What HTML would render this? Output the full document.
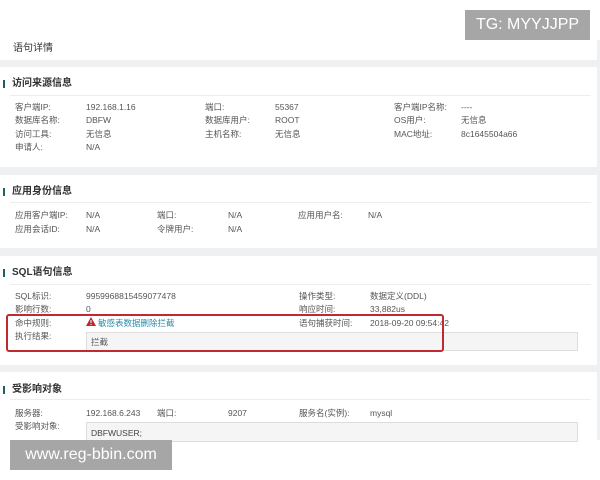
<!DOCTYPE html>
<html><head><meta charset="utf-8"><style>
*{margin:0;padding:0;box-sizing:border-box}
body{width:600px;height:480px;background:#fff;position:relative;overflow:hidden;font-family:"Liberation Sans","Noto Sans CJK SC",sans-serif;color:#555;font-size:8.5px}
.bg{position:absolute;left:0;top:40px;width:600px;height:400px;background:#eef0f1}
.p{position:absolute;left:0;width:597px;background:#fff}
.t{position:absolute;white-space:nowrap;line-height:10px}
.h{position:absolute;left:12px;font-size:10px;font-weight:bold;color:#333;line-height:12px}
.bar{position:absolute;left:3px;width:2px;height:8px;background:#1f5f63}
.dv{position:absolute;left:10px;right:6px;height:1px;background:#eceeee}
.box{position:absolute;left:86px;width:492px;background:#f5f5f5;border:1px solid #ddd}
</style></head><body>
<div class="bg"></div>
<div class="p" style="top:40px;height:20px"><div class="t" style="left:13px;top:3px;font-size:10px;color:#333;line-height:12px">语句详情</div></div>

<div class="p" style="top:67px;height:100px">
<div class="bar" style="top:13px"></div><div class="h" style="top:11px">访问来源信息</div><div class="dv" style="top:28px"></div>
<div class="t" style="left:15px;top:35px">客户端IP:</div><div class="t" style="left:86px;top:35px">192.168.1.16</div><div class="t" style="left:205px;top:35px">端口:</div><div class="t" style="left:275px;top:35px">55367</div><div class="t" style="left:394px;top:35px">客户端IP名称:</div><div class="t" style="left:461px;top:35px">----</div>
<div class="t" style="left:15px;top:48px">数据库名称:</div><div class="t" style="left:86px;top:48px">DBFW</div><div class="t" style="left:205px;top:48px">数据库用户:</div><div class="t" style="left:275px;top:48px">ROOT</div><div class="t" style="left:394px;top:48px">OS用户:</div><div class="t" style="left:461px;top:48px">无信息</div>
<div class="t" style="left:15px;top:62px">访问工具:</div><div class="t" style="left:86px;top:62px">无信息</div><div class="t" style="left:205px;top:62px">主机名称:</div><div class="t" style="left:275px;top:62px">无信息</div><div class="t" style="left:394px;top:62px">MAC地址:</div><div class="t" style="left:461px;top:62px">8c1645504a66</div>
<div class="t" style="left:15px;top:75px">申请人:</div><div class="t" style="left:86px;top:75px">N/A</div>
</div>

<div class="p" style="top:175px;height:73px">
<div class="bar" style="top:13px"></div><div class="h" style="top:11px">应用身份信息</div><div class="dv" style="top:27px"></div>
<div class="t" style="left:15px;top:35px">应用客户端IP:</div><div class="t" style="left:86px;top:35px">N/A</div><div class="t" style="left:157px;top:35px">端口:</div><div class="t" style="left:228px;top:35px">N/A</div><div class="t" style="left:298px;top:35px">应用用户名:</div><div class="t" style="left:368px;top:35px">N/A</div>
<div class="t" style="left:15px;top:49px">应用会话ID:</div><div class="t" style="left:86px;top:49px">N/A</div><div class="t" style="left:157px;top:49px">令牌用户:</div><div class="t" style="left:228px;top:49px">N/A</div>
</div>

<div class="p" style="top:256px;height:109px">
<div class="bar" style="top:13px"></div><div class="h" style="top:11px">SQL语句信息</div><div class="dv" style="top:28px"></div>
<div class="t" style="left:15px;top:35px">SQL标识:</div><div class="t" style="left:86px;top:35px">9959968815459077478</div><div class="t" style="left:299px;top:35px">操作类型:</div><div class="t" style="left:370px;top:35px">数据定义(DDL)</div>
<div class="t" style="left:15px;top:48px">影响行数:</div><div class="t" style="left:86px;top:48px">0</div><div class="t" style="left:299px;top:48px">响应时间:</div><div class="t" style="left:370px;top:48px">33,882us</div>
<div class="t" style="left:15px;top:62px">命中规则:</div>
<svg style="position:absolute;left:86px;top:61px" width="10" height="9" viewBox="0 0 10 9"><path d="M5 0L10 9H0Z" fill="#c0262d"/><rect x="4.5" y="3" width="1" height="3" fill="#fff"/><rect x="4.5" y="7" width="1" height="1" fill="#fff"/></svg>
<div class="t" style="left:98px;top:62px;color:#2a8aa6">敏感表数据删除拦截</div><div class="t" style="left:299px;top:62px">语句捕获时间:</div><div class="t" style="left:370px;top:62px">2018-09-20 09:54:42</div>
<div class="t" style="left:15px;top:75px">执行结果:</div>
<div class="box" style="top:76px;height:19px"><div class="t" style="left:4px;top:4px">拦截</div></div>
<div style="position:absolute;left:6px;top:58px;width:438px;height:38px;border:2px solid #c0292f;border-radius:3px"></div>
</div>

<div class="p" style="top:372px;height:68px">
<div class="bar" style="top:14px"></div><div class="h" style="top:12px">受影响对象</div><div class="dv" style="top:27px"></div>
<div class="t" style="left:15px;top:36px">服务器:</div><div class="t" style="left:86px;top:36px">192.168.6.243</div><div class="t" style="left:157px;top:36px">端口:</div><div class="t" style="left:228px;top:36px">9207</div><div class="t" style="left:299px;top:36px">服务名(实例):</div><div class="t" style="left:370px;top:36px">mysql</div>
<div class="t" style="left:15px;top:49px">受影响对象:</div>
<div class="box" style="top:50px;height:20px"><div class="t" style="left:4px;top:5px;color:#444">DBFWUSER;</div></div>
</div>

<div style="position:absolute;left:465px;top:10px;width:125px;height:30px;background:#a6a6a6;color:#fff;font-size:16px;line-height:30px;text-align:center">TG: MYYJJPP</div>
<div style="position:absolute;left:10px;top:440px;width:162px;height:30px;background:#a6a6a6;color:#fff;font-size:16px;line-height:30px;text-align:center">www.reg-bbin.com</div>
</body></html>
